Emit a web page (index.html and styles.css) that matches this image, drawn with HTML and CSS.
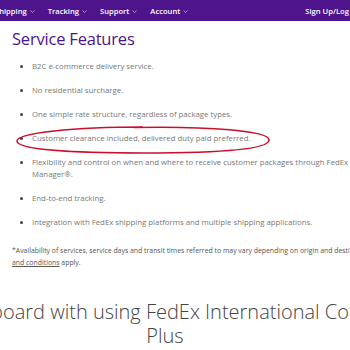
FILE: index.html
```html
<!DOCTYPE html>
<html lang="en">

<head>
    <meta charset="UTF-8">
    <meta name="viewport" content="width=device-width, initial-scale=1.0">
    <title>FedEx International Connect Plus</title>
    <link rel="stylesheet" href="styles.css">
</head>

<body>

    <header>
        <nav class="topnav">
            <ul class="menu">
                <li><a href="">Shipping <svg class="caret" width="5" height="3" viewBox="0 0 5 3"><path d="M0.5 0.5 L2.5 2.5 L4.5 0.5" fill="none" stroke="#fff" stroke-width="0.7" /></svg></a></li>
                <li><a href="">Tracking <svg class="caret" width="5" height="3" viewBox="0 0 5 3"><path d="M0.5 0.5 L2.5 2.5 L4.5 0.5" fill="none" stroke="#fff" stroke-width="0.7" /></svg></a></li>
                <li><a href="">Support <svg class="caret" width="5" height="3" viewBox="0 0 5 3"><path d="M0.5 0.5 L2.5 2.5 L4.5 0.5" fill="none" stroke="#fff" stroke-width="0.7" /></svg></a></li>
                <li><a href="">Account <svg class="caret" width="5" height="3" viewBox="0 0 5 3"><path d="M0.5 0.5 L2.5 2.5 L4.5 0.5" fill="none" stroke="#fff" stroke-width="0.7" /></svg></a></li>
            </ul>
            <a class="signin" href="">Sign Up/Log In</a>
        </nav>
    </header>

    <main class="content">
        <h2 class="title">Service Features</h2>

        <ul class="features">
            <li>B2C e-commerce delivery service.</li>
            <li>No residential surcharge.</li>
            <li>One simple rate structure, regardless of package types.</li>
            <li class="circled">
                Customer clearance included, delivered duty paid preferred.
                <!-- red pen mark -->
                <svg class="ring" width="258" height="30" viewBox="0 0 258 30">
                    <path d="M129 2 C 60 2, 3 8, 3 16 C 3 25, 60 28, 129 28 C 200 28, 255 25, 255 15 C 255 6, 195 1, 120 2.5"
                        fill="none" stroke="#c8102e" stroke-width="1.6" />
                </svg>
            </li>
            <li>Flexibility and control on when and where to receive customer packages through FedEx Delivery
                Manager&reg;.</li>
            <li>End-to-end tracking.</li>
            <li>Integration with FedEx shipping platforms and multiple shipping applications.</li>
        </ul>

        <p class="note">*Availability of services, service days and transit times referred to may vary depending on
            origin and destination. <a href="">Terms and conditions</a> apply.</p>
    </main>

    <section class="onboard">
        <h2>Get onboard with using FedEx International Connect Plus</h2>
    </section>

</body>

</html>
```

FILE: styles.css
```css
* {
    box-sizing: border-box;
}

body {
    font-family: "Open Sans", Arial, sans-serif;
    margin: 0;
    padding: 0;
    width: 350px;
    height: 350px;
    overflow: hidden;
    background-color: #fff;
}

/* top purple bar */
.topnav {
    display: flex;
    justify-content: space-between;
    align-items: center;
    height: 21px;
    width: 366px;
    padding-right: 8px;
    background-color: #4d148c;
}

.menu {
    display: flex;
    gap: 13px;
    margin: 0 0 0 -5px;
    padding: 0;
    list-style: none;
}

.menu li a,
.signin {
    display: flex;
    align-items: center;
    gap: 3px;
    color: #fff;
    font-size: 7.6px;
    font-weight: 600;
    text-decoration: none;
    white-space: nowrap;
}

.caret {
    opacity: 0.75;
    margin-top: 1px;
}

.content {
    width: 380px;
    padding: 0 0 0 12px;
}

.title {
    margin: 6px 0 10px;
    font-size: 16.5px;
    font-weight: 400;
    letter-spacing: -0.2px;
    color: #4d148c;
}

.features {
    margin: 0;
    padding-left: 20px;
    font-size: 7.8px;
    line-height: 12px;
    color: #777;
}

.features li {
    margin-bottom: 12px;
}

.features li::marker {
    color: #444;
}

.circled {
    position: relative;
}

.ring {
    position: absolute;
    left: -18px;
    top: -7px;
}

.note {
    width: 390px;
    margin: 17px 0 0;
    font-size: 6.9px;
    line-height: 12px;
    color: #555;
}

.note a {
    color: #555;
}

.onboard {
    width: 500px;
    margin: 31px 0 0 -85px;
    text-align: center;
}

.onboard h2 {
    margin: 0;
    font-size: 20px;
    font-weight: 300;
    line-height: 24px;
    color: #444;
}
```
